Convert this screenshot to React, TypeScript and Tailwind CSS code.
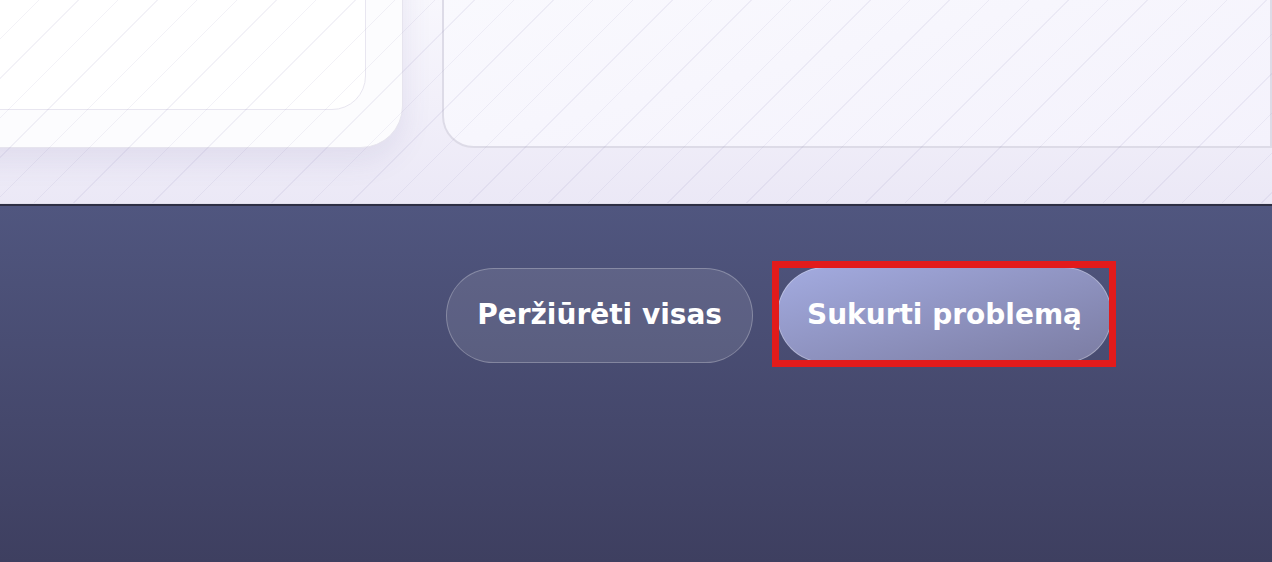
const font = "font-['DejaVu_Sans','Noto_Sans',sans-serif]";

const ProblemActions = () => {
  return (
    <div className="flex items-center justify-end gap-6 pr-[160px] pt-[61px]">
      <button
        className={`${font} h-[95px] rounded-full border border-white/25 bg-white/10 px-[30px] text-[28px] font-bold text-white`}
      >
        Peržiūrėti visas
      </button>
      <div className="relative">
        <button
          className={`${font} h-[96px] rounded-full border border-white/30 bg-gradient-to-br from-[#a3abe0] to-[#7b7ca2] px-[29px] text-[28px] font-bold text-white`}
        >
          Sukurti problemą
        </button>
        {/* highlight frame */}
        <span className="pointer-events-none absolute -top-[6px] -right-[4px] -bottom-[4px] -left-[5px] border-[7px] border-[#e21b1b]" />
      </div>
    </div>
  );
};

export default function App() {
  return (
    <div className="flex h-[562px] w-[1272px] flex-col overflow-hidden">
      <div className="relative h-[206px] shrink-0 overflow-hidden bg-gradient-to-b from-[#f8f7fd] to-[#ebe8f6]">
        <div className="absolute inset-x-0 bottom-[58px] flex items-end gap-[39px]">
          <div className="-ml-[60px] w-[463px] shrink-0 rounded-b-[42px] border border-[#e6e4ee] bg-[#fcfcfe] pr-[36px] pb-[37px] shadow-[0_12px_30px_rgba(90,80,150,0.10)]">
            <div className="h-[180px] rounded-b-[34px] border border-[#e8e6f0] bg-white" />
          </div>
          <div className="h-[200px] flex-1 rounded-bl-[32px] border-2 border-[#dddbe7] bg-gradient-to-br from-[#fafafe] to-[#f4f2fc]" />
        </div>
        <div className="pointer-events-none absolute inset-0 bg-[repeating-linear-gradient(135deg,transparent_0px,transparent_27px,rgba(120,110,170,0.09)_27px,rgba(120,110,170,0.09)_28px)]" />
        <div className="absolute inset-x-0 bottom-0 h-[3px] border-t border-[#e2e0ec] bg-[#2e2f44]" />
      </div>
      <div className="flex-1 bg-gradient-to-b from-[#50567f] to-[#3e3f60]">
        <ProblemActions />
      </div>
    </div>
  );
}
